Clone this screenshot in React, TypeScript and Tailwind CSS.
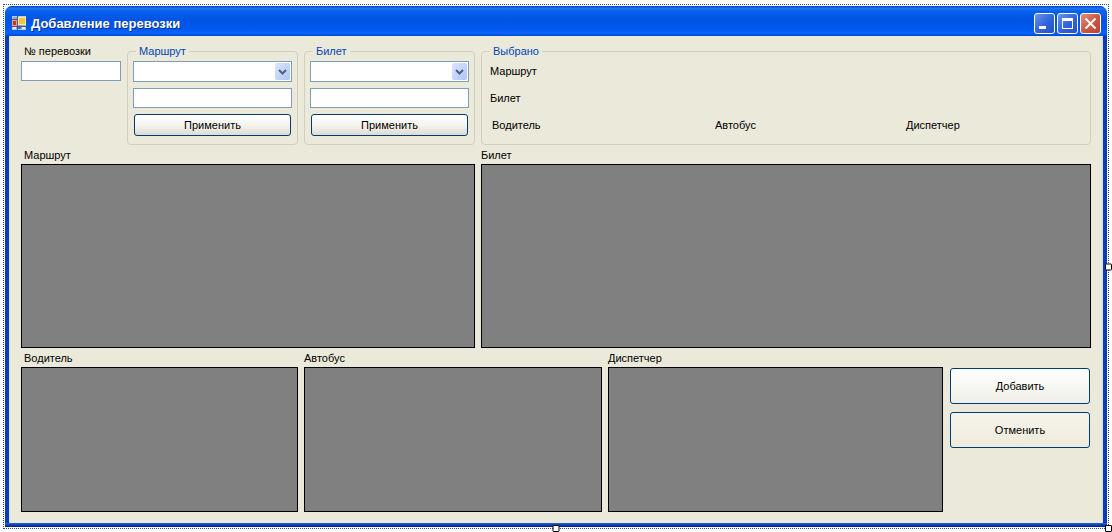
import { useState } from 'react';
import type { ReactNode } from 'react';

interface ChildrenProps {
  children: ReactNode;
}

interface FilterGroupProps {
  id: string;
  title: string;
  options: string[];
}

interface DataPanelProps {
  title: string;
  className: string;
  labelClassName?: string;
}

const FormIcon = () => (
  <svg width="16" height="16" viewBox="0 0 16 16" aria-hidden="true">
    <rect x="1.5" y="1.5" width="13" height="13" fill="#8fa6cf" stroke="#b9c8e4" />
    <path d="M1 4.5h5M6.5 1v14M1 11.5h14" stroke="#46598c" />
    <rect x="1.5" y="5.5" width="4" height="5" fill="#c8342b" stroke="#e9a08f" />
    <rect x="7.5" y="2.5" width="7" height="7" fill="#f3c440" stroke="#fbe9a6" />
    <rect x="7" y="12" width="3" height="2" fill="#3c6fd0" />
    <rect x="11" y="12" width="3" height="2" fill="#e8eef8" />
    <rect x="2" y="12" width="3" height="2" fill="#dfe7f5" />
  </svg>
);

const CaptionButton = ({ label, className, children }: ChildrenProps & { label: string; className: string }) => (
  <button
    type="button"
    aria-label={label}
    className={`flex h-[21px] w-[21px] items-center justify-center rounded-[3px] border border-white bg-linear-to-br ${className}`}
  >
    <svg width="19" height="19" viewBox="0 0 19 19" fill="none" aria-hidden="true">
      {children}
    </svg>
  </button>
);

const TitleBar = () => (
  <header className="flex h-[30px] items-center gap-1 rounded-t-[7px] bg-[linear-gradient(180deg,#0a3fc0_0%,#1f74f0_8%,#0560ee_18%,#0054e3_45%,#0058ee_75%,#0566ff_90%,#0347c6_100%)] pt-1 pr-[6px] pl-[6px]">
    <FormIcon />
    <h1 className="flex-1 text-[13px] leading-[15px] font-bold text-white [text-shadow:1px_1px_0_#0a2f86]">
      Добавление перевозки
    </h1>
    <div className="flex gap-[2px]">
      <CaptionButton label="Свернуть" className="from-[#6a94ec] via-[#3566de] to-[#2350c8]">
        <path d="M4 13.5h7" stroke="#fff" strokeWidth="3" />
      </CaptionButton>
      <CaptionButton label="Развернуть" className="from-[#6a94ec] via-[#3566de] to-[#2350c8]">
        <rect x="4.5" y="4.5" width="10" height="10" stroke="#fff" />
        <path d="M4 5.5h11" stroke="#fff" strokeWidth="3" />
      </CaptionButton>
      <CaptionButton label="Закрыть" className="from-[#e08f7c] via-[#cf5a44] to-[#b5432c]">
        <path d="M4.5 4.5l10 10M14.5 4.5l-10 10" stroke="#fff" strokeWidth="2" />
      </CaptionButton>
    </div>
  </header>
);

const GroupBox = ({ title, className, children }: ChildrenProps & { title: string; className: string }) => (
  <fieldset className={`min-w-0 rounded-[4px] border border-[#d0d0bf] px-[5px] ${className}`}>
    <legend className="ml-[3px] px-[3px] text-[#0046b5]">{title}</legend>
    {children}
  </fieldset>
);

const FilterGroup = ({ id, title, options }: FilterGroupProps) => {
  const [selected, setSelected] = useState('');
  const [value, setValue] = useState('');

  return (
    <GroupBox title={title} className="w-[171px] shrink-0 pb-2">
      <div className="flex flex-col gap-[6px] pt-[3px]">
        <div className="relative">
          <select
            id={`${id}-field`}
            aria-label={title}
            value={selected}
            onChange={(e) => setSelected(e.target.value)}
            className="block h-[21px] w-full appearance-none border border-[#7f9db9] bg-white px-1"
          >
            <option value=""></option>
            {options.map((option) => (
              <option key={option}>{option}</option>
            ))}
          </select>
          {/* Drop-down arrow on top of the select */}
          <span className="pointer-events-none absolute top-[2px] right-[2px] flex h-[17px] w-[15px] items-center justify-center rounded-[2px] bg-linear-to-br from-[#dbe5fd] to-[#aec5f5]">
            <svg width="9" height="6" viewBox="0 0 9 6" fill="none" aria-hidden="true">
              <path d="M1 1l3.5 3.5L8 1" stroke="#4d6185" strokeWidth="2" />
            </svg>
          </span>
        </div>
        <input
          type="text"
          aria-label={`${title}: значение`}
          value={value}
          onChange={(e) => setValue(e.target.value)}
          className="h-5 w-full border border-[#7f9db9] bg-white px-1"
        />
        <button
          type="button"
          className="mx-px h-[22px] rounded-[3px] border border-[#003c74] bg-linear-to-b from-white via-[#f5f4ef] to-[#dedbd0]"
        >
          Применить
        </button>
      </div>
    </GroupBox>
  );
};

const DataPanel = ({ title, className, labelClassName = '' }: DataPanelProps) => (
  <section aria-label={title} className="min-w-0">
    <h2 className={`mb-[2px] ${labelClassName}`}>{title}</h2>
    <div className={`border border-black bg-[#808080] ${className}`} />
  </section>
);

const Handle = ({ className }: { className: string }) => (
  <span className={`absolute h-[7px] w-[7px] rounded-[1px] border border-black bg-white ${className}`} />
);

const App = () => {
  const [number, setNumber] = useState('');

  return (
    <div className="overflow-hidden bg-white pt-1 pr-[3px] pb-[3px] pl-[3px] font-['Liberation_Sans',Arial,sans-serif] text-[11px] leading-[13px] text-black">
      <div className="relative border border-dotted border-[#2c4a86] p-px">
        <div className="rounded-t-[8px] bg-[#0a3cb4]">
          <TitleBar />
          <main className="mx-1 border-x border-[#cfe0f8] bg-[#ebe9d9] px-[11px] pt-[9px] pb-[11px]">
            <div className="flex gap-[6px]">
              <div className="w-[100px] shrink-0">
                <label htmlFor="transfer-number" className="block pl-[3px]">
                  № перевозки
                </label>
                <input
                  id="transfer-number"
                  type="text"
                  value={number}
                  onChange={(e) => setNumber(e.target.value)}
                  className="mt-[3px] block h-5 w-full border border-[#7f9db9] bg-white px-1"
                />
              </div>
              <FilterGroup id="route" title="Маршрут" options={['Номер', 'Пункт назначения']} />
              <FilterGroup id="ticket" title="Билет" options={['Номер', 'Цена']} />
              <GroupBox title="Выбрано" className="flex-1">
                <div className="flex flex-col gap-[14px] pt-[7px] pl-[3px]">
                  <p>Маршрут</p>
                  <p>Билет</p>
                  <div className="grid grid-cols-[223fr_191fr_179fr] pl-[2px]">
                    <p>Водитель</p>
                    <p>Автобус</p>
                    <p>Диспетчер</p>
                  </div>
                </div>
              </GroupBox>
            </div>

            <div className="mt-1 grid grid-cols-[454px_1fr] gap-[6px]">
              <DataPanel title="Маршрут" className="h-[184px]" labelClassName="pl-[3px]" />
              <DataPanel title="Билет" className="h-[184px]" />
            </div>

            <div className="mt-1 grid grid-cols-[277fr_298fr_335fr_142px] gap-[6px]">
              <DataPanel title="Водитель" className="h-[145px]" labelClassName="pl-[3px]" />
              <DataPanel title="Автобус" className="h-[145px]" />
              <DataPanel title="Диспетчер" className="h-[145px]" />
              <div className="flex flex-col gap-2 px-px pt-4">
                <button
                  type="button"
                  className="h-9 rounded-[3px] border border-[#003c74] bg-linear-to-b from-white to-[#efeee8]"
                >
                  Добавить
                </button>
                <button
                  type="button"
                  className="h-9 rounded-[3px] border border-[#003c74] bg-linear-to-b from-[#f6f4ea] to-[#eeebdd]"
                >
                  Отменить
                </button>
              </div>
            </div>
          </main>
          <div className="h-1 bg-linear-to-b from-[#2a62d8] to-[#001c8c]" />
        </div>
        <Handle className="top-1/2 -right-1 -translate-y-1/2" />
        <Handle className="-bottom-1 left-1/2 -translate-x-1/2" />
        <Handle className="-right-1 -bottom-1" />
      </div>
    </div>
  );
};

export default App;
